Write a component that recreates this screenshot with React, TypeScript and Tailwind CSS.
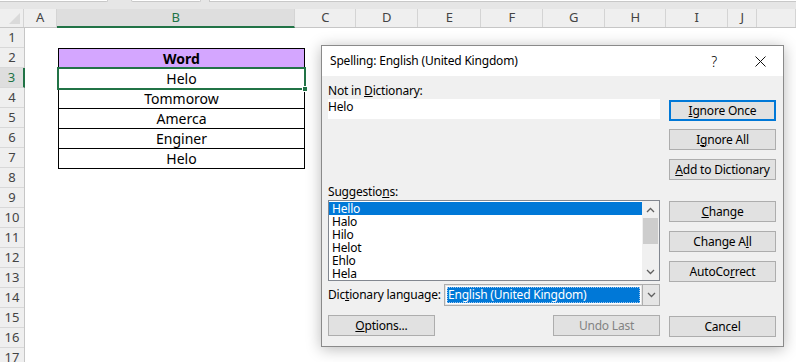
import React from "react";

const GREEN = "#217346";

const columns = [
  { label: "A", cls: "w-[34px]" },
  { label: "B", cls: "w-[246px]", active: true },
  { label: "C", cls: "w-[63px]" },
  { label: "D", cls: "w-[64px]" },
  { label: "E", cls: "w-[65px]" },
  { label: "F", cls: "w-[64px]" },
  { label: "G", cls: "w-[64px]" },
  { label: "H", cls: "w-[63px]" },
  { label: "I", cls: "w-[64px]" },
  { label: "J", cls: "w-[30px]" },
  { label: "", cls: "w-[40px]" },
];

const words = ["Helo", "Tommorow", "Amerca", "Enginer", "Helo"];
const suggestions = ["Hello", "Halo", "Hilo", "Helot", "Ehlo", "Hela"];

const Chevron = ({ up = false }: { up?: boolean }) => (
  <svg width="9" height="6" viewBox="0 0 9 6" className={up ? "rotate-180" : ""}>
    <polyline points="1,1 4.5,4.5 8,1" fill="none" stroke="#606060" strokeWidth="1.3" />
  </svg>
);

const Btn = ({
  children,
  focused = false,
  disabled = false,
  className = "",
}: {
  children: React.ReactNode;
  focused?: boolean;
  disabled?: boolean;
  className?: string;
}) => (
  <div
    className={`h-[21px] w-[107px] flex items-center justify-center bg-[#e1e1e1] text-[12px] ${
      focused ? "border-2 border-[#0078d7]" : "border border-[#adadad]"
    } ${disabled ? "text-[#838383]" : "text-black"} ${className}`}
  >
    {children}
  </div>
);

const U = ({ children }: { children: React.ReactNode }) => (
  <span className="underline underline-offset-[1px] decoration-1">{children}</span>
);

function SpellingDialog() {
  return (
    <div className="absolute left-[321px] top-[45px] w-[463px] h-[302px] border border-[#8a8a8a] bg-[#f0f0f0] shadow-[0_2px_14px_rgba(0,0,0,0.28)] font-['Noto_Sans',sans-serif] tracking-[-0.2px] flex flex-col">
      {/* title bar */}
      <div className="h-[30px] bg-white flex items-center pl-[8px] text-[12px] text-black">
        <span>Spelling: English (United Kingdom)</span>
        <div className="ml-auto flex h-full">
          <div className="w-[46px] flex items-center justify-center text-[14px] font-light">?</div>
          <div className="w-[46px] flex items-center justify-center">
            <svg width="11" height="11" viewBox="0 0 11 11">
              <path d="M0.5 0.5 L10.5 10.5 M10.5 0.5 L0.5 10.5" stroke="#111" strokeWidth="1" />
            </svg>
          </div>
        </div>
      </div>

      {/* body */}
      <div className="flex flex-1 pl-[6px] text-[12px] text-black">
        <div className="w-[332px] flex flex-col">
          <div className="mt-[6px] h-[17px] leading-[17px]">
            Not in <U>D</U>ictionary:
          </div>
          <div className="h-[20px] bg-white leading-[15px]">Helo</div>

          <div className="mt-[64px] h-[17px] leading-[17px]">
            Suggestio<U>n</U>s:
          </div>
          <div className="h-[81px] border border-[#828790] bg-white flex">
            <div className="flex-1 pt-[1px]">
              {suggestions.map((s, i) => (
                <div
                  key={s}
                  className={`h-[13px] leading-[13px] pl-[3px] ${i === 0 ? "bg-[#0078d7] text-white" : ""}`}
                >
                  {s}
                </div>
              ))}
            </div>
            <div className="w-[17px] bg-[#f0f0f0] flex flex-col items-center">
              <div className="h-[17px] flex items-center justify-center">
                <Chevron up />
              </div>
              <div className="w-[15px] h-[26px] bg-[#cdcdcd]" />
              <div className="mt-auto h-[17px] flex items-center justify-center">
                <Chevron />
              </div>
            </div>
          </div>

          <div className="mt-[3px] h-[22px] flex items-center">
            <span>
              Dic<U>t</U>ionary language:
            </span>
            <div className="ml-auto w-[216px] h-[22px] border border-[#adadad] bg-[#e5e5e5] flex">
              <div className="flex-1 m-[1px] bg-white p-[1px]">
                <div className="h-full bg-[#0078d7] text-white leading-[15px] pl-[1px] outline-1 outline-dotted outline-[#9ec5ee] -outline-offset-1">
                  English (United Kingdom)
                </div>
              </div>
              <div className="w-[17px] border-l border-[#adadad] flex items-center justify-center">
                <Chevron />
              </div>
            </div>
          </div>

          <div className="mt-[9px] flex justify-between">
            <Btn>
              <U>O</U>ptions...
            </Btn>
            <Btn disabled>Undo Last</Btn>
          </div>
        </div>

        <div className="ml-[9px] w-[107px] flex flex-col">
          <Btn focused className="mt-[24px]">
            <U>I</U>gnore Once
          </Btn>
          <Btn className="mt-[8px]">
            I<U>g</U>nore All
          </Btn>
          <Btn className="mt-[9px]">
            <U>A</U>dd to Dictionary
          </Btn>
          <Btn className="mt-[21px]">
            <U>C</U>hange
          </Btn>
          <Btn className="mt-[9px]">
            Change A<U>l</U>l
          </Btn>
          <Btn className="mt-[9px]">
            AutoCo<U>r</U>rect
          </Btn>
          <Btn className="mt-[34px]">Cancel</Btn>
        </div>
      </div>
    </div>
  );
}

export default function App() {
  const rows = Array.from({ length: 17 }, (_, i) => i + 1);

  return (
    <div className="relative w-[796px] h-[362px] overflow-hidden bg-white font-['Noto_Sans',sans-serif]">
      {/* formula bar remnant */}
      <div className="h-[9px] bg-[#e6e6e6] flex gap-[24px]">
        <div className="w-[108px] h-[2px] bg-white border-b border-r border-[#c8c8c8] rounded-br-[2px]" />
        <div className="w-[70px] h-[2px] bg-white border-b border-x border-[#c8c8c8] rounded-b-[2px] -ml-[1px]" />
        <div className="flex-1 h-[2px] bg-white border-b border-l border-[#c8c8c8] -ml-[16px]" />
      </div>

      {/* column headers */}
      <div className="flex h-[19px] bg-[#efefef] border-b border-[#c6c6c6]">
        <div className="w-[25px] border-r border-[#d4d4d4] relative">
          <div className="absolute right-[3px] bottom-[3px] w-0 h-0 border-l-[11px] border-l-transparent border-b-[11px] border-b-[#dadada]" />
        </div>
        {columns.map((c) => (
          <div
            key={c.label + c.cls}
            className={`${c.cls} flex items-center justify-center text-[13px] border-r border-[#d4d4d4] ${
              c.active ? "bg-[#dedede] text-[#217346] border-b-2 border-b-[#217346] -mb-[1px]" : "text-[#444]"
            }`}
          >
            {c.label}
          </div>
        ))}
      </div>

      <div className="flex">
        {/* row headers */}
        <div className="w-[25px] flex flex-col bg-[#efefef] border-r border-[#c6c6c6] shrink-0">
          {rows.map((r) => (
            <div
              key={r}
              className={`h-[20px] flex items-center justify-center text-[13px] border-b border-[#d8d8d8] ${
                r === 3 ? "bg-[#dedede] text-[#217346] border-r-2 border-r-[#217346] -mr-[1px]" : "text-[#444]"
              }`}
            >
              {r}
            </div>
          ))}
        </div>

        {/* sheet */}
        <div className="relative flex-1 flex">
          <div className="w-[33px]" />
          <div className="w-[247px] flex flex-col">
            <div className="h-[20px]" />
            <div className="border-t border-x border-black text-[14px] text-black">
              <div className="h-[20px] bg-[#d4a6ff] border-b border-black flex items-center justify-center font-bold">
                Word
              </div>
              {words.map((w, i) => (
                <div key={i} className="h-[20px] border-b border-black flex items-center justify-center">
                  {w}
                </div>
              ))}
            </div>
          </div>

          {/* active cell B3 */}
          <div className="absolute left-[32px] top-[39px] w-[249px] h-[23px] border-2 border-[#217346]" />
          <div className="absolute left-[277px] top-[58px] w-[6px] h-[6px] bg-[#217346] border border-white" />
        </div>
      </div>

      <SpellingDialog />
    </div>
  );
}
